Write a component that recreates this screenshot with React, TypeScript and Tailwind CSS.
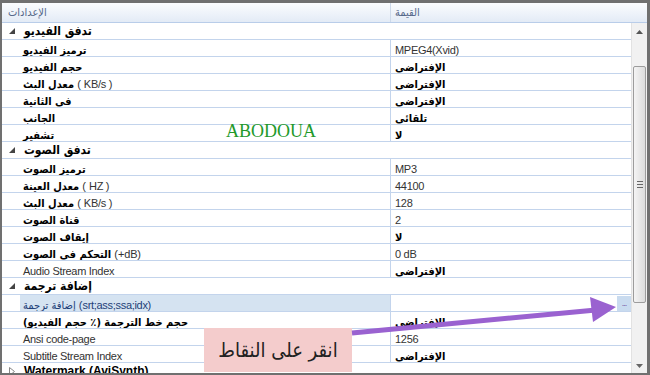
import React from "react";

const LAT = "font-['Liberation_Sans','DejaVu_Sans',sans-serif]";
const AR = "font-['DejaVu_Sans_Condensed','DejaVu_Sans',sans-serif]";

type Row =
  | { kind: "cat"; label: React.ReactNode; open: boolean }
  | { kind: "prop"; label: React.ReactNode; value?: React.ReactNode; selected?: boolean; button?: boolean };

const A = ({ children }: { children: React.ReactNode }) => (
  <span className={`${AR} font-bold text-[11px] text-black`}>{children}</span>
);
const L = ({ children }: { children: React.ReactNode }) => (
  <span className={`${LAT} text-[11px] tracking-[-0.3px] text-[#333]`}>{children}</span>
);

const def = <A>الإفتراضي</A>;

const rows: Row[] = [
  { kind: "cat", label: <span className={AR}>تدفق الفيديو</span>, open: true },
  { kind: "prop", label: <A>ترميز الفيديو</A>, value: <L>MPEG4(Xvid)</L> },
  { kind: "prop", label: <A>حجم الفيديو</A>, value: def },
  { kind: "prop", label: <><A>معدل البث</A><L> ( KB/s )</L></>, value: def },
  { kind: "prop", label: <A>في الثانية</A>, value: def },
  { kind: "prop", label: <A>الجانب</A>, value: <A>تلقائي</A> },
  { kind: "prop", label: <A>تشفير</A>, value: <A>لا</A> },
  { kind: "cat", label: <span className={AR}>تدفق الصوت</span>, open: true },
  { kind: "prop", label: <A>ترميز الصوت</A>, value: <L>MP3</L> },
  { kind: "prop", label: <><A>معدل العينة</A><L> ( HZ )</L></>, value: <L>44100</L> },
  { kind: "prop", label: <><A>معدل البث</A><L> ( KB/s )</L></>, value: <L>128</L> },
  { kind: "prop", label: <A>قناة الصوت</A>, value: <L>2</L> },
  { kind: "prop", label: <A>إيقاف الصوت</A>, value: <A>لا</A> },
  { kind: "prop", label: <><A>التحكم في الصوت</A><L> (+dB)</L></>, value: <L>0 dB</L> },
  { kind: "prop", label: <L>Audio Stream Index</L>, value: def },
  { kind: "cat", label: <span className={AR}>إضافة ترجمة</span>, open: true },
  {
    kind: "prop",
    label: (
      <>
        <span className={`${AR} text-[11px] text-[#1e3f78]`}>إضافة ترجمة</span>
        <span className={`${LAT} text-[11px] tracking-[-0.3px] text-[#1e3f78]`}> (srt;ass;ssa;idx)</span>
      </>
    ),
    selected: true,
    button: true,
  },
  { kind: "prop", label: <A>حجم خط الترجمة (٪ حجم الفيديو)</A>, value: def },
  { kind: "prop", label: <L>Ansi code-page</L>, value: <L>1256</L> },
  { kind: "prop", label: <L>Subtitle Stream Index</L>, value: def },
  { kind: "cat", label: <span className={LAT}>Watermark (AviSynth)</span>, open: false },
];

function CatRow({ label, open }: { label: React.ReactNode; open: boolean }) {
  return (
    <div className="h-[17px] border-b border-[#c3d4ec] flex items-center shrink-0">
      <div className="w-[22px] h-full flex items-center justify-center shrink-0">
        {open ? (
          <svg width="6" height="6" viewBox="0 0 6 6" className="ml-[-2px]">
            <polygon points="6,0 6,6 0,6" fill="#444" />
          </svg>
        ) : (
          <svg width="6" height="9" viewBox="0 0 6 9" className="ml-[-2px]">
            <polygon points="0.5,0.5 5.5,4.5 0.5,8.5" fill="none" stroke="#888" strokeWidth="1" />
          </svg>
        )}
      </div>
      <span className="font-bold text-[12px] text-black leading-none">{label}</span>
    </div>
  );
}

function PropRow({ row }: { row: Extract<Row, { kind: "prop" }> }) {
  return (
    <div className="h-[17px] border-b border-[#c3d4ec] flex shrink-0">
      <div className="w-[18px] shrink-0" />
      <div
        className={`w-[371px] shrink-0 pl-[3px] flex items-center whitespace-nowrap overflow-hidden border-r border-[#c3d4ec] ${
          row.selected ? "bg-[#d5e3f1]" : ""
        }`}
      >
        <span dir="ltr" className="leading-none">{row.label}</span>
      </div>
      <div className="flex-1 pl-[4px] flex items-center whitespace-nowrap overflow-hidden relative">
        <span className="leading-none">{row.value}</span>
        {row.button && (
          <div className="absolute right-0 top-[1px] w-[14px] h-[15px] bg-[#c9dbef] flex items-end justify-center pb-[3px]">
            <span className={`${LAT} text-[9px] leading-none text-[#7a5aa8] tracking-[-1px]`}>...</span>
          </div>
        )}
      </div>
    </div>
  );
}

export default function App() {
  return (
    <div className="w-[650px] h-[375px] bg-[#707070] pt-[3px] pl-[2px] pr-[3px] pb-[2px] relative overflow-hidden">
      <div className="w-full h-full bg-white flex flex-col overflow-hidden">
        {/* header */}
        <div className="h-[20px] shrink-0 flex border-b border-[#b9cde9] bg-gradient-to-b from-[#fbfcfe] to-[#e3ebf6]">
          <div className="w-[389px] shrink-0 border-r border-[#cdd9ea] pl-[6px] flex items-center">
            <span className={`${AR} text-[11px] text-[#56698a] leading-none`}>الإعدادات</span>
          </div>
          <div className="flex-1 pl-[4px] flex items-center">
            <span className={`${AR} text-[11px] text-[#56698a] leading-none`}>القيمة</span>
          </div>
        </div>
        {/* body */}
        <div className="flex flex-1 min-h-0">
          <div className="flex-1 flex flex-col overflow-hidden">
            {rows.map((r, i) =>
              r.kind === "cat" ? <CatRow key={i} label={r.label} open={r.open} /> : <PropRow key={i} row={r} />
            )}
          </div>
          {/* scrollbar */}
          <div className="w-[16px] shrink-0 bg-[#f1f1f1] border-l border-[#e2e2e2] flex flex-col items-center">
            <div className="h-[17px] w-full flex items-center justify-center shrink-0">
              <svg width="7" height="4" viewBox="0 0 7 4">
                <polygon points="3.5,0 7,4 0,4" fill="#555" />
              </svg>
            </div>
            <div className="h-[26px] shrink-0" />
            <div className="w-[13px] h-[237px] shrink-0 rounded-[2px] border border-[#9c9c9c] bg-gradient-to-r from-[#f4f4f4] to-[#dcdcdc] flex flex-col items-center justify-center gap-[2px]">
              <div className="w-[6px] h-px bg-[#666]" />
              <div className="w-[6px] h-px bg-[#666]" />
              <div className="w-[6px] h-px bg-[#666]" />
            </div>
            <div className="flex-1" />
            <div className="h-[14px] w-full flex items-center justify-center shrink-0">
              <svg width="7" height="4" viewBox="0 0 7 4">
                <polygon points="0,0 7,0 3.5,4" fill="#666" />
              </svg>
            </div>
          </div>
        </div>
      </div>

      {/* watermark text */}
      <div className="absolute left-[226px] top-[122px] font-['Liberation_Serif',serif] text-[18px] leading-none text-[#22992a]">
        ABODOUA
      </div>

      {/* annotation box */}
      <div className="absolute left-[204px] top-[328px] w-[148px] h-[44px] bg-[#f4cccc] flex items-center justify-center">
        <span dir="rtl" className={`${AR} text-[20px] text-[#222] leading-none`}>انقر على النقاط</span>
      </div>

      {/* arrow */}
      <svg className="absolute left-0 top-0 pointer-events-none" width="650" height="375" viewBox="0 0 650 375">
        <line x1="352" y1="333" x2="596" y2="310" stroke="#9a62d0" strokeWidth="5" />
        <polygon points="590,297 616,307 593,322" fill="#9a62d0" />
      </svg>
    </div>
  );
}
